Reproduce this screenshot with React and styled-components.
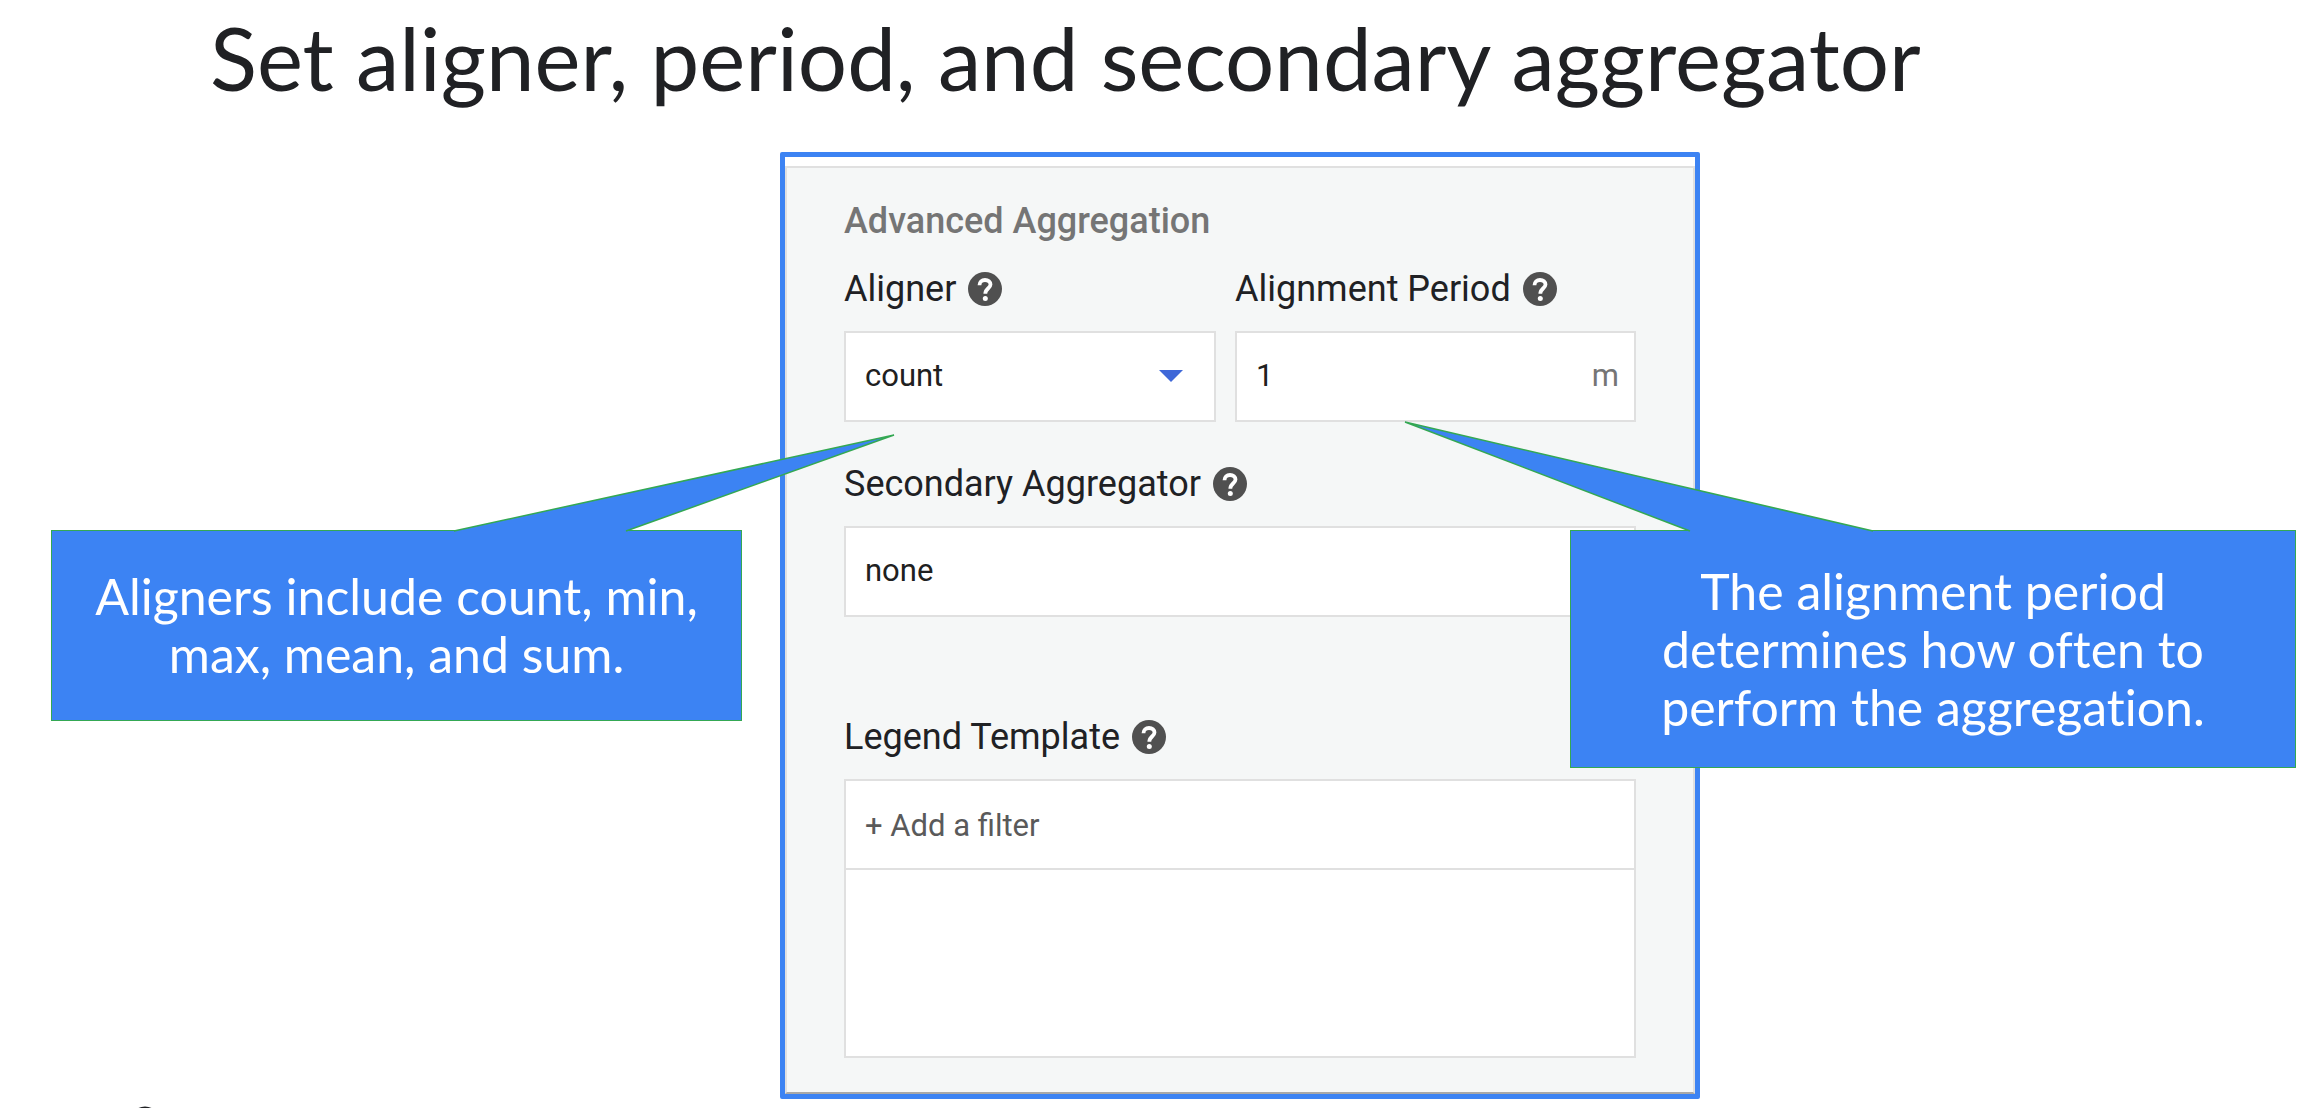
import React from "react";
import styled, { createGlobalStyle } from "styled-components";

const BLUE = "#3c83f3";
const GREEN = "#34a853";
const LINE = "#e0e0e0";

const GlobalStyle = createGlobalStyle`
  *, *::before, *::after { box-sizing: border-box; }
  body { margin: 0; background: #fff; }
`;

const Slide = styled.div`
  position: relative;
  display: flex;
  flex-direction: column;
  min-height: 100vh;
  overflow: hidden;
  font-family: Roboto, "Liberation Sans", sans-serif;
  color: #202124;
`;

const Title = styled.h1`
  margin: 0;
  padding: 0 200px 36px 210px;
  font-family: Lato, "Open Sans", sans-serif;
  font-size: 87px;
  line-height: 116px;
  font-weight: 400;
`;

const Stage = styled.main`
  display: grid;
  grid-template-columns: 780fr minmax(920px, 920fr) 602fr;
  align-items: start;
`;

const Panel = styled.form`
  grid-column: 2;
  grid-row: 1;
  border: 5px solid ${BLUE};
  border-radius: 2px;
  padding-top: 9px;
`;

const PanelBody = styled.div`
  display: flex;
  flex-direction: column;
  border: 2px solid ${LINE};
  border-bottom-color: #a8a8a8;
  background: #f5f7f7;
  padding: 31px 57px 34px;
`;

const Heading = styled.h2`
  margin: 0 0 24px;
  font-size: 36px;
  line-height: 44px;
  font-weight: 500;
  color: #757575;
`;

const FieldRow = styled.div`
  display: grid;
  grid-template-columns: 372fr 401fr;
  gap: 19px;
`;

const Field = styled.div`
  display: flex;
  flex-direction: column;
  gap: 20px;
  margin-bottom: ${(p) => p.$space || 0}px;
`;

const LabelRow = styled.div`
  display: flex;
  align-items: center;
  gap: 12px;
  height: 44px;
`;

const Label = styled.label`
  font-size: 36px;
  line-height: 44px;
`;

const HelpButton = styled.button`
  display: flex;
  padding: 0;
  border: 0;
  background: none;
  color: #505050;
`;

const Box = styled.div`
  position: relative;
  display: flex;
  align-items: center;
  height: 91px;
  padding-bottom: 2px;
  border: 2px solid ${LINE};
  background: #fff;
`;

const controlStyles = `
  appearance: none;
  width: 100%;
  height: 100%;
  margin: 0;
  padding: 0 19px;
  border: 0;
  outline: 0;
  background: transparent;
  font-family: inherit;
  font-size: 31px;
  line-height: 40px;
  color: #202020;
`;

const Select = styled.select`${controlStyles}`;
const Input = styled.input`${controlStyles}`;

const Caret = styled.svg`
  position: absolute;
  right: 31px;
  pointer-events: none;
  fill: #3f68d8;
`;

const Unit = styled.span`
  padding-right: 15px;
  font-size: 31px;
  line-height: 40px;
  color: #757575;
`;

const Template = styled.div`
  border: 2px solid ${LINE};
  background: #fff;
`;

const AddFilter = styled.button`
  display: block;
  width: 100%;
  height: 89px;
  padding: 2px 19px 0;
  border: 0;
  border-bottom: 2px solid ${LINE};
  background: none;
  font-family: inherit;
  font-size: 31px;
  line-height: 40px;
  text-align: left;
  color: #5a5a5a;
`;

const TemplateText = styled.textarea`
  display: block;
  width: 100%;
  height: 186px;
  padding: 19px;
  border: 0;
  outline: 0;
  resize: none;
  font: inherit;
`;

const Callout = styled.aside`
  position: relative;
  z-index: 1;
  grid-row: 1;
  grid-column: ${(p) => (p.$side === "left" ? 1 : 3)};
  display: flex;
  align-items: center;
  justify-content: center;
  margin: ${(p) => (p.$side === "left" ? "378px 38px 0 51px" : "378px 6px 0 -130px")};
  padding: ${(p) => (p.$side === "left" ? "36px 40px 37px" : "31px 70px")};
  border: 1px solid ${GREEN};
  background: ${BLUE};
`;

const CalloutText = styled.p`
  margin: 0;
  font-family: Lato, "Open Sans", sans-serif;
  font-size: 50px;
  line-height: 58px;
  font-variant-ligatures: none;
  text-align: center;
  color: #fff;
`;

const Tail = styled.svg`
  position: absolute;
  bottom: 100%;
  ${(p) => (p.$side === "left" ? "right: -154px;" : "left: -167px;")}
  fill: ${BLUE};
  stroke: ${GREEN};
  stroke-width: 1.5;
  pointer-events: none;
`;

const PageMark = styled.svg`
  position: absolute;
  left: 130px;
  bottom: -28px;
  fill: none;
  stroke: #202124;
  stroke-width: 3;
`;

function Help({ topic }) {
  return (
    <HelpButton type="button" aria-label={`Help: ${topic}`}>
      <svg width="34" height="34" viewBox="0 0 34 34" aria-hidden="true">
        <circle cx="17" cy="17" r="17" fill="currentColor" />
        <path
          d="M11.500 13.200C11.500 9.800 13.800 8 17 8S22.500 9.900 22.500 12.600C22.500 16.200 17.300 16.500 17.300 21.800"
          fill="none"
          stroke="#fff"
          strokeWidth="3.800"
        />
        <circle cx="17.300" cy="26.600" r="2.500" fill="#fff" />
      </svg>
    </HelpButton>
  );
}

function LabelledField({ id, label, space, children }) {
  return (
    <Field $space={space}>
      <LabelRow>
        <Label htmlFor={id}>{label}</Label>
        <Help topic={label} />
      </LabelRow>
      {children}
    </Field>
  );
}

function Dropdown({ id, options }) {
  return (
    <Box>
      <Select id={id} defaultValue={options[0]}>
        {options.map((o) => (
          <option key={o}>{o}</option>
        ))}
      </Select>
      <Caret width="24" height="12" viewBox="0 0 24 12" aria-hidden="true">
        <path d="M0 0h24L12 12z" />
      </Caret>
    </Box>
  );
}

export default function App() {
  return (
    <>
      <GlobalStyle />
      <Slide>
        <Title>Set aligner, period, and secondary aggregator</Title>
        <Stage>
          <Callout $side="left">
            <Tail $side="left" width="269" height="96" viewBox="0 0 269 96" overflow="visible" aria-hidden="true">
              <path d="M-172 96L268 0L0 96" />
            </Tail>
            <CalloutText>Aligners include count, min, max, mean, and sum.</CalloutText>
          </Callout>
          <Panel>
            <PanelBody>
              <Heading>Advanced Aggregation</Heading>
              <FieldRow>
                <LabelledField id="aligner" label="Aligner" space={40}>
                  <Dropdown id="aligner" options={["count", "min", "max", "mean", "sum"]} />
                </LabelledField>
                <LabelledField id="period" label="Alignment Period" space={40}>
                  <Box>
                    <Input id="period" type="text" inputMode="numeric" defaultValue="1" />
                    <Unit>m</Unit>
                  </Box>
                </LabelledField>
              </FieldRow>
              <LabelledField id="secondary" label="Secondary Aggregator" space={98}>
                <Dropdown id="secondary" options={["none", "mean", "sum"]} />
              </LabelledField>
              <LabelledField id="legend" label="Legend Template">
                <Template>
                  <AddFilter type="button">+ Add a filter</AddFilter>
                  <TemplateText id="legend" />
                </Template>
              </LabelledField>
            </PanelBody>
          </Panel>
          <Callout $side="right">
            <Tail $side="right" width="467" height="109" viewBox="0 0 467 109" overflow="visible" aria-hidden="true">
              <path d="M286 109L1 0L469 109" />
            </Tail>
            <CalloutText>The alignment period determines how often to perform the aggregation.</CalloutText>
          </Callout>
        </Stage>
        <PageMark width="30" height="30" viewBox="0 0 30 30" aria-hidden="true">
          <circle cx="15" cy="15" r="13" />
        </PageMark>
      </Slide>
    </>
  );
}
